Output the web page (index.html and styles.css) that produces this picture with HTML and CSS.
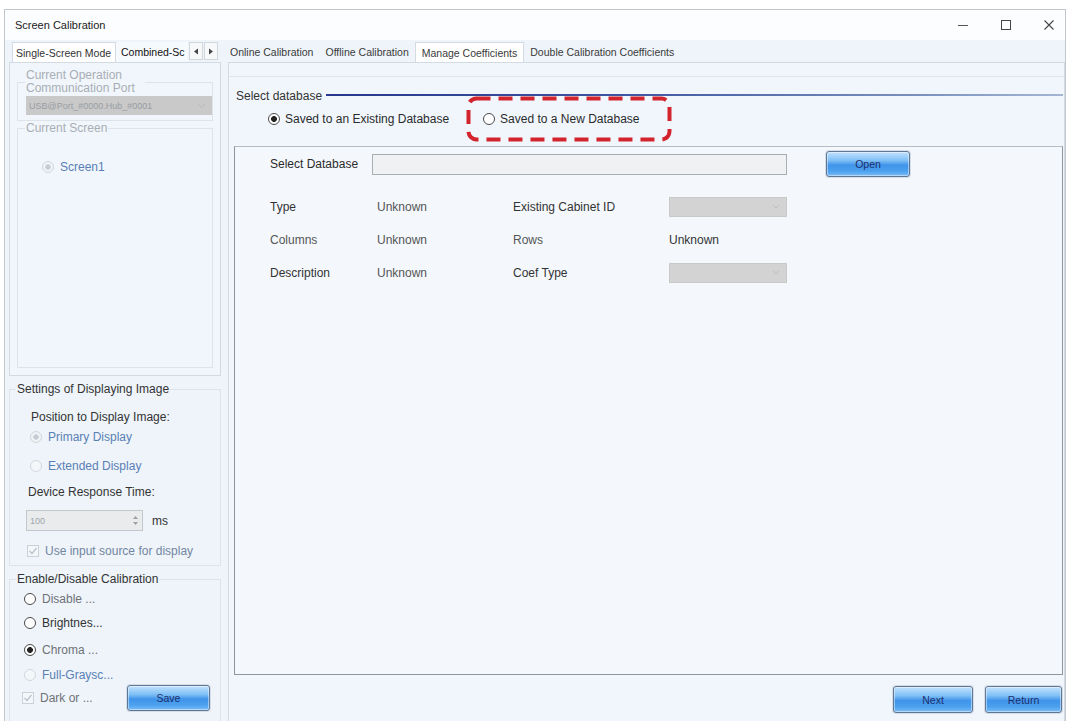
FILE: index.html
```html
<!DOCTYPE html>
<html lang="en">
<head>
<meta charset="utf-8">
<title>Screen Calibration</title>
<link rel="stylesheet" href="styles.css">
</head>
<body>
<div class="window">
  <div class="titlebar">
    <span class="title">Screen Calibration</span>
    <div class="winctrls">
      <span class="wc"><svg width="12" height="12" viewBox="0 0 12 12"><line x1="1" y1="6.5" x2="11" y2="6.5" stroke="#555" stroke-width="1"/></svg></span>
      <span class="wc"><svg width="12" height="12" viewBox="0 0 12 12"><rect x="1.5" y="1.5" width="9" height="9" fill="none" stroke="#444" stroke-width="1"/></svg></span>
      <span class="wc"><svg width="12" height="12" viewBox="0 0 12 12"><path d="M1.5 1.5 L10.5 10.5 M10.5 1.5 L1.5 10.5" stroke="#444" stroke-width="1.1"/></svg></span>
    </div>
  </div>
  <div class="main">
    <div class="leftcol">
      <div class="tabs ltabs">
        <div class="tab active lt1">Single-Screen Mode</div>
        <div class="tab lt2">Combined-Sc</div>
        <div class="arrowbtn"><svg width="6" height="7" viewBox="0 0 6 7"><polygon points="5,0.5 1,3.5 5,6.5" fill="#444"/></svg></div>
        <div class="arrowbtn"><svg width="6" height="7" viewBox="0 0 6 7"><polygon points="1,0.5 5,3.5 1,6.5" fill="#444"/></svg></div>
      </div>
      <div class="lpanel">
        <fieldset class="grp grp-port">
          <legend class="dis port-legend">Current Operation Communication Port</legend>
          <div class="select-dis">
            <span>USB@Port_#0000.Hub_#0001</span>
            <svg width="9" height="6" viewBox="0 0 9 6"><path d="M1 1 L4.5 4.5 L8 1" fill="none" stroke="#b5b8bb" stroke-width="1"/></svg>
          </div>
        </fieldset>
        <fieldset class="grp grp-screen">
          <legend class="dis">Current Screen</legend>
          <div class="row screen-row"><span class="radio dis-on"></span><span class="blue">Screen1</span></div>
        </fieldset>
      </div>
      <fieldset class="grp grp-settings">
        <legend>Settings of Displaying Image</legend>
        <div class="row s1 indent3">Position to Display Image:</div>
        <div class="row s2"><span class="radio dis-on"></span><span class="blue">Primary Display</span></div>
        <div class="row s3"><span class="radio dis-off"></span><span class="blue">Extended Display</span></div>
        <div class="row s4 indent1">Device Response Time:</div>
        <div class="row s5">
          <div class="spin"><span>100</span>
            <svg width="7" height="13" viewBox="0 0 7 13"><polygon points="3.5,2 1,5 6,5" fill="#9aa0a6"/><polygon points="3.5,11 1,8 6,8" fill="#9aa0a6"/></svg>
          </div>
          <span class="ms">ms</span>
        </div>
        <div class="row s6"><span class="check dis-check"><svg width="10" height="10" viewBox="0 0 10 10"><path d="M1.5 5 L4 7.5 L8.5 2" fill="none" stroke="#b8c0c8" stroke-width="1.2"/></svg></span><span class="greyblue">Use input source for display</span></div>
      </fieldset>
      <fieldset class="grp grp-enable">
        <legend>Enable/Disable Calibration</legend>
        <div class="row e1"><span class="radio"></span><span class="grey">Disable ...</span></div>
        <div class="row e2"><span class="radio"></span><span>Brightnes...</span></div>
        <div class="row e3"><span class="radio on"></span><span class="grey">Chroma ...</span></div>
        <div class="row e4"><span class="radio dis-off"></span><span class="blue">Full-Graysc...</span></div>
        <div class="row e5">
          <span class="check dis-check"><svg width="10" height="10" viewBox="0 0 10 10"><path d="M1.5 5 L4 7.5 L8.5 2" fill="none" stroke="#b8c0c8" stroke-width="1.2"/></svg></span><span class="grey">Dark or ...</span>
          <button class="btn save">Save</button>
        </div>
      </fieldset>
    </div>
    <div class="rightcol">
      <div class="tabs rtabs">
        <div class="tab first">Online Calibration</div>
        <div class="tab">Offline Calibration</div>
        <div class="tab active">Manage Coefficients</div>
        <div class="tab">Double Calibration Coefficients</div>
      </div>
      <div class="rpanel">
        <div class="page">
          <div class="legend-row"><span>Select database</span><span class="bline"></span></div>
          <div class="choice-row">
            <span class="radio on"></span><span class="ch1">Saved to an Existing Database</span>
            <span class="radio"></span><span>Saved to a New Database</span>
            <svg class="highlight" width="206" height="46" viewBox="0 0 206 46"><rect x="2.5" y="2.5" width="201" height="41" rx="8" ry="8" fill="none" stroke="#d3232c" stroke-width="4" stroke-dasharray="14 8"/></svg>
          </div>
          <div class="bigbox">
            <div class="dbrow">
              <span class="dblabel">Select Database</span>
              <div class="dbinput"></div>
              <button class="btn open">Open</button>
            </div>
            <div class="info">
              <span>Type</span><span class="val">Unknown</span><span>Existing Cabinet ID</span>
              <div class="combo"><svg width="8" height="5" viewBox="0 0 8 5"><path d="M1 1 L4 4 L7 1" fill="none" stroke="#bfbfbf" stroke-width="1"/></svg></div>
              <span class="val">Columns</span><span class="val">Unknown</span><span class="val">Rows</span><span>Unknown</span>
              <span>Description</span><span class="val">Unknown</span><span>Coef Type</span>
              <div class="combo"><svg width="8" height="5" viewBox="0 0 8 5"><path d="M1 1 L4 4 L7 1" fill="none" stroke="#bfbfbf" stroke-width="1"/></svg></div>
            </div>
          </div>
          <div class="btnrow">
            <button class="btn next">Next</button>
            <button class="btn ret">Return</button>
          </div>
        </div>
      </div>
    </div>
  </div>
</div>
</body>
</html>
```

FILE: styles.css
```css
* { box-sizing: border-box; }
html, body { margin: 0; padding: 0; background: #ffffff; }
body {
  font-family: "Liberation Sans", Arial, sans-serif;
  font-size: 12px;
  color: #333;
  overflow: hidden;
}

.window {
  margin: 9px 0 0 4px;
  width: 1062px;
  height: 712px;
  border: 1px solid #c3c7cc;
  border-bottom: none;
  background: #eef4fa;
  display: flex;
  flex-direction: column;
}

.titlebar {
  height: 30px;
  background: #fcfdfe;
  display: flex;
  align-items: center;
  padding-left: 10px;
}
.title { flex: 1; font-size: 11px; color: #222; }
.winctrls { display: flex; gap: 13px; margin-right: 1px; }
.wc { width: 30px; height: 30px; display: flex; align-items: center; justify-content: center; }

.main {
  flex: 1;
  display: flex;
  padding-left: 4px;
  gap: 7px;
  min-height: 0;
}

/* tabs */
.tabs {
  height: 22px;
  padding-top: 2px;
  display: flex;
  align-items: stretch;
}
.tab {
  height: 20px;
  display: flex;
  align-items: center;
  white-space: nowrap;
  color: #333;
}
.tab.active {
  background: #ffffff;
  border: 1px solid #d5dbe2;
  border-bottom: none;
}

/* left column */
.leftcol {
  width: 212px;
  display: flex;
  flex-direction: column;
}
.ltabs { padding-left: 3px; }
.ltabs .tab { font-size: 10.5px; }
.lt1 { width: 104px; padding-left: 3px; }
.lt2 { width: 72px; padding-left: 5px; color: #111; background: #f7fafd; }
.arrowbtn {
  width: 14px;
  height: 18px;
  margin-left: 1px;
  border: 1px solid #d2d7dd;
  background: #f6f8fa;
  display: flex;
  align-items: center;
  justify-content: center;
}

.lpanel {
  height: 314px;
  border: 1px solid #d3dae2;
  background: #f0f6fc;
  padding: 6px 7px 0 7px;
  display: flex;
  flex-direction: column;
}

fieldset.grp {
  margin: 0;
  border: 1px solid #dce3ea;
  min-width: 0;
}
fieldset.grp legend {
  padding: 0 1px;
  line-height: 13px;
  font-size: 12px;
}
.dis { color: #a9aeb4; }
.blue { color: #5a7fb4; }
.grey { color: #6f7276; }
.greyblue { color: #73869f; }

.grp-port { padding: 1px 0 5px 8px; }
.port-legend { width: 120px; margin-left: -1px; }
.select-dis {
  height: 19px;
  background: #c9c9c9;
  display: flex;
  align-items: center;
  justify-content: space-between;
  padding: 0 6px 0 3px;
  font-size: 9px;
  color: #9a9ea3;
}
.grp-screen {
  margin-top: 1px !important;
  height: 246px;
  padding: 0 0 0 24px;
}
.grp-screen legend { margin-left: -17px; }
.screen-row { margin-top: 22px; }

.row {
  height: 20px;
  display: flex;
  align-items: center;
  white-space: nowrap;
}
.row .radio, .row .check { margin-right: 6px; }

.radio {
  width: 12px;
  height: 12px;
  border-radius: 50%;
  border: 1px solid #4a4a4a;
  background: #ffffff;
  display: inline-block;
  flex: none;
}
.radio.on { background: radial-gradient(circle, #222 0 2.6px, #ffffff 3.2px); }
.radio.dis-on { border-color: #cfd5db; background: radial-gradient(circle, #c5ccd3 0 2.4px, #f1f4f7 3px); }
.radio.dis-off { border-color: #d2d8de; background: #f4f7fa; }
.check {
  width: 12px;
  height: 12px;
  border: 1px solid #c9d0d7;
  background: #f4f7fa;
  display: inline-flex;
  align-items: center;
  justify-content: center;
  flex: none;
}

/* settings group */
.grp-settings {
  margin-top: 7px !important;
  padding: 0 0 4px 17px;
  height: 183px;
}
.grp-settings legend { margin-left: -11px; }
.s1 { margin-top: 11px; }
.indent3 { padding-left: 4px; }
.indent1 { padding-left: 1px; }
.s2 { padding-left: 3px; }
.s3 { margin-top: 9px; padding-left: 3px; }
.s4 { margin-top: 6px; }
.s5 { margin-top: 8px; height: 21px; margin-left: -1px; }
.s6 { margin-top: 10px; }
.spin {
  width: 117px;
  height: 21px;
  background: #e9ebed;
  border: 1px solid #c3c8cd;
  display: flex;
  align-items: center;
  justify-content: space-between;
  padding: 0 3px 0 3px;
  font-size: 9px;
  color: #a0a5aa;
}
.ms { margin-left: 9px; }

/* enable group */
.grp-enable {
  margin-top: 7px !important;
  flex: 1;
  border-bottom: none !important;
  padding: 0 0 0 14px;
}
.grp-enable legend { margin-left: -8px; }
.e1 { margin-top: 3px; }
.e2 { margin-top: 4px; }
.e3 { margin-top: 7px; }
.e4 { margin-top: 5px; }
.e5 { height: 26px; margin-left: -2px; }
.save { margin-left: auto; margin-right: 10px; width: 83px; }

/* buttons */
.btn {
  height: 26px;
  border: 1px solid #5f7696;
  border-radius: 3px;
  background: linear-gradient(to bottom, #c3e2fc 0%, #7fc0f6 35%, #3f93ea 55%, #4da2ef 80%, #7cbcf5 100%);
  box-shadow: inset 0 0 0 1px rgba(255,255,255,0.45), 0 0 0 1px #d5dde6;
  font-family: "Liberation Sans", Arial, sans-serif;
  font-size: 10.5px;
  color: #1d2f6b;
  padding: 0;
  cursor: default;
}

/* right column */
.rightcol {
  flex: 1;
  display: flex;
  flex-direction: column;
  min-width: 0;
}
.rtabs { padding-left: 0; }
.rtabs .tab { font-size: 10.5px; padding: 0 6px; color: #3a3a3a; }
.rtabs .tab.first { padding-left: 2px; }

.rpanel {
  flex: 1;
  border: 1px solid #d3dae2;
  border-bottom: none;
  background: #f0f6fc;
}
.page {
  margin-top: 13px;
  border-top: 1px solid #dde5ee;
  padding: 12px 1px 0 5px;
}
.legend-row {
  height: 14px;
  display: flex;
  align-items: center;
  padding-left: 2px;
  font-size: 12px;
  color: #333;
}
.bline {
  flex: 1;
  height: 2px;
  margin: -2px 0 0 4px;
  background: linear-gradient(to right, #27388c 0%, #3e55a0 40%, #7990bd 80%, #a4b6d2 100%);
}

.choice-row {
  position: relative;
  height: 18px;
  margin-top: 7px;
  padding-left: 34px;
  display: flex;
  align-items: center;
  font-size: 12px;
  color: #2b2b2b;
}
.choice-row .radio { margin-right: 5px; }
.ch1 { margin-right: 34px; }
.highlight {
  position: absolute;
  left: 232px;
  top: -14px;
}

.bigbox {
  margin-top: 18px;
  height: 529px;
  border: 1px solid #8f959b;
  border-top-color: #b6bcc2;
  background: #f4f8fd;
  padding: 4px 0 0 35px;
}
.dbrow {
  height: 26px;
  display: flex;
  align-items: center;
}
.dblabel { width: 102px; color: #2b2b2b; }
.dbinput {
  width: 415px;
  height: 21px;
  border: 1px solid #a9aeb3;
  background: #eff1f3;
}
.open { margin-left: 39px; width: 84px; }

.info {
  margin-top: 13px;
  display: grid;
  grid-template-columns: 107px 136px 156px 118px;
  grid-auto-rows: 33px;
  align-items: center;
  color: #333;
}
.info .val { color: #555; }
.combo {
  height: 20px;
  background: #d3d3d3;
  border: 1px solid #c9c9c9;
  display: flex;
  align-items: center;
  justify-content: flex-end;
  padding-right: 6px;
}

.btnrow {
  margin-top: 11px;
  display: flex;
  justify-content: flex-end;
  gap: 12px;
  padding-right: 1px;
}
.next { width: 80px; height: 27px; }
.ret { width: 77px; height: 27px; }
```
